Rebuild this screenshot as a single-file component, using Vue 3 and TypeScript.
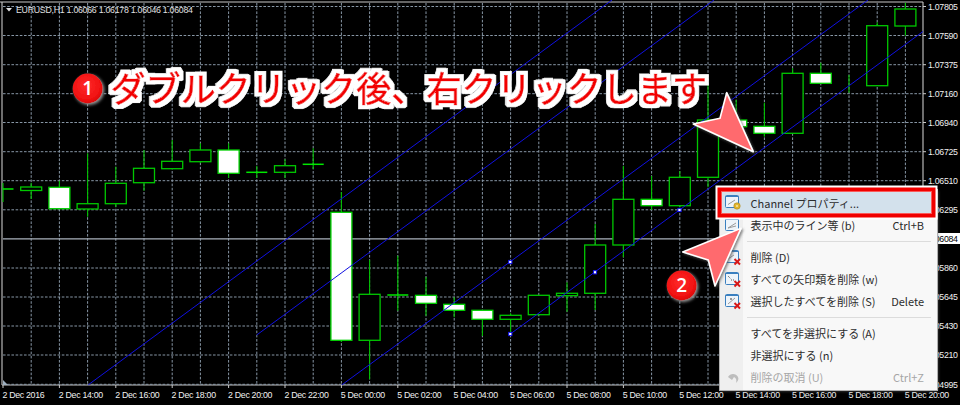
<script setup lang="ts">
type Candle = { top: number; bottom: number; high: number; low: number; kind: 'white' | 'hollow' | 'doji' }

const step = 28.2
const xAt = (i: number) => 3 + step * i

const candles: Candle[] = [
  { top: 189, bottom: 189, high: 183, low: 202, kind: 'doji' },
  { top: 187, bottom: 190.5, high: 182.7, low: 199, kind: 'hollow' },
  { top: 187.3, bottom: 208.7, high: 180.7, low: 209, kind: 'white' },
  { top: 203.7, bottom: 209, high: 153.3, low: 216.7, kind: 'hollow' },
  { top: 183.3, bottom: 203.7, high: 166.7, low: 207, kind: 'hollow' },
  { top: 168.3, bottom: 182.7, high: 150, low: 190.7, kind: 'hollow' },
  { top: 161.3, bottom: 168.7, high: 140, low: 169, kind: 'hollow' },
  { top: 150, bottom: 161.7, high: 143.3, low: 163, kind: 'hollow' },
  { top: 150, bottom: 173.3, high: 143.3, low: 178, kind: 'white' },
  { top: 172.3, bottom: 172.3, high: 166, low: 178, kind: 'doji' },
  { top: 165.7, bottom: 172.3, high: 159.3, low: 178, kind: 'hollow' },
  { top: 164.3, bottom: 164.3, high: 148.3, low: 169, kind: 'doji' },
  { top: 212.3, bottom: 340.3, high: 192, low: 342, kind: 'white' },
  { top: 294.3, bottom: 340.3, high: 260, low: 379.3, kind: 'hollow' },
  { top: 295, bottom: 295, high: 255.7, low: 310.7, kind: 'doji' },
  { top: 295.3, bottom: 303.3, high: 277, low: 315.7, kind: 'white' },
  { top: 304.3, bottom: 310.3, high: 297.3, low: 317.3, kind: 'white' },
  { top: 310.3, bottom: 319.3, high: 310, low: 336, kind: 'white' },
  { top: 315.3, bottom: 319.3, high: 313.3, low: 333, kind: 'hollow' },
  { top: 295.3, bottom: 314.7, high: 295.3, low: 314.7, kind: 'hollow' },
  { top: 293.3, bottom: 295.7, high: 282.3, low: 311.7, kind: 'hollow' },
  { top: 245, bottom: 293.3, high: 224, low: 310, kind: 'hollow' },
  { top: 199.3, bottom: 245, high: 166, low: 257.3, kind: 'hollow' },
  { top: 199.3, bottom: 205.7, high: 176, low: 210, kind: 'white' },
  { top: 177.3, bottom: 205.7, high: 171, low: 207, kind: 'hollow' },
  { top: 120, bottom: 177.3, high: 85, low: 187, kind: 'hollow' },
  { top: 120, bottom: 126.7, high: 100, low: 140, kind: 'white' },
  { top: 126.3, bottom: 133.3, high: 102.7, low: 136.7, kind: 'white' },
  { top: 73.3, bottom: 133.3, high: 68.3, low: 133.3, kind: 'hollow' },
  { top: 73.3, bottom: 83.3, high: 62.7, low: 84, kind: 'white' },
  { top: 84.5, bottom: 84.5, high: 75, low: 92.7, kind: 'hollow' },
  { top: 25.7, bottom: 85.7, high: 22.3, low: 85.7, kind: 'hollow' },
  { top: 9, bottom: 26, high: 2.7, low: 35.7, kind: 'hollow' },
]

const gridX = Array.from({ length: 32 }, (_, i) => xAt(i + 1))
const gridY = [6.5, 35.5, 64.7, 93.7, 122.5, 151.7, 180.7, 209.8, 268, 297, 326, 355, 384.3]

const prices = [
  { y: 6.5, t: '1.07805' }, { y: 35.5, t: '1.07590' }, { y: 64.7, t: '1.07375' }, { y: 93.7, t: '1.07160' },
  { y: 122.5, t: '1.06940' }, { y: 151.7, t: '1.06725' }, { y: 180.7, t: '1.06510' }, { y: 209.8, t: '1.06295' },
  { y: 268, t: '1.05860' }, { y: 297, t: '1.05645' }, { y: 326, t: '1.05430' }, { y: 355, t: '1.05210' }, { y: 384.3, t: '1.04995' },
]

const dates = [
  '2 Dec 2016', '2 Dec 14:00', '2 Dec 16:00', '2 Dec 18:00', '2 Dec 20:00', '2 Dec 22:00',
  '5 Dec 00:00', '5 Dec 02:00', '5 Dec 04:00', '5 Dec 06:00', '5 Dec 08:00', '5 Dec 10:00',
  '5 Dec 12:00', '5 Dec 14:00', '5 Dec 16:00', '5 Dec 18:00', '5 Dec 20:00',
]

const lines = [
  { x1: 88.3, y1: 384.8, x2: 612, y2: 0 },
  { x1: 256.7, y1: 335, x2: 714, y2: 0 },
  { x1: 341.7, y1: 385, x2: 868, y2: 0 },
  { x1: 510.3, y1: 334, x2: 923, y2: 31.5 },
]
const anchors = [
  { x: 510.3, y: 262 }, { x: 510.3, y: 334 }, { x: 595, y: 272.3 }, { x: 679.5, y: 210 },
]

type Row = { label: string; key: string; icon: string; hint?: string; disabled?: boolean; active?: boolean }
const groups: Row[][] = [
  [
    { label: 'Channel プロパティ...', key: 'p', icon: 'prop', active: true },
    { label: '表示中のライン等 (b)', key: 'b', icon: 'show', hint: 'Ctrl+B' },
  ],
  [
    { label: '削除 (D)', key: 'd', icon: 'del' },
    { label: 'すべての矢印類を削除 (w)', key: 'w', icon: 'delarrow' },
    { label: '選択したすべてを削除 (S)', key: 's', icon: 'delall', hint: 'Delete' },
  ],
  [
    { label: 'すべてを非選択にする (A)', key: 'a', icon: '' },
    { label: '非選択にする (n)', key: 'n', icon: '' },
    { label: '削除の取消 (U)', key: 'u', icon: 'undo', hint: 'Ctrl+Z', disabled: true },
  ],
]
</script>

<template>
  <div class="screen">
    <svg class="chart" width="960" height="405" viewBox="0 0 960 405">
      <line class="frame" x1="0" y1="2" x2="923" y2="2" />
      <line class="frame" x1="2" y1="2" x2="2" y2="385" />
      <line class="frame" x1="923" y1="2" x2="923" y2="385" />
      <line class="frame" x1="2" y1="385" x2="923" y2="385" />

      <line v-for="x in gridX" :key="'v' + x" class="grid" :x1="x" y1="3" :x2="x" y2="385" />
      <line v-for="y in gridY" :key="'h' + y" class="grid" x1="3" :y1="y" x2="923" :y2="y" />
      <line class="bid" x1="3" y1="238.8" x2="923" y2="238.8" />

      <g v-for="(c, i) in candles" :key="'c' + i">
        <line class="wick" :x1="xAt(i)" :y1="c.high" :x2="xAt(i)" :y2="c.low" />
        <line v-if="c.kind === 'doji'" class="doji" :x1="Math.max(xAt(i) - 10.5, 3)" :y1="c.top" :x2="xAt(i) + 10.5" :y2="c.top" />
        <rect v-else :class="c.kind" :x="xAt(i) - 10.5" :y="c.top" width="21" :height="c.bottom - c.top" />
      </g>

      <line v-for="(l, i) in lines" :key="'l' + i" class="channel" :x1="l.x1" :y1="l.y1" :x2="l.x2" :y2="l.y2" />
      <rect v-for="(a, i) in anchors" :key="'a' + i" class="anchor" :x="a.x - 1.6" :y="a.y - 1.6" width="3.2" height="3.2" />

      <polygon class="shift" points="3,380 3,385 8,385" />
      <polygon class="title" points="6,8 12,8 9,11.5" />
      <text class="title" x="16" y="12.5" xml:space="preserve">EURUSD,H1  1.06066 1.06178 1.06046 1.06084</text>

      <g v-for="p in prices" :key="p.t">
        <line class="tick" x1="923" :y1="p.y" x2="926" :y2="p.y" />
        <text class="axis" x="928" :y="p.y + 3.2">{{ p.t }}</text>
      </g>
      <rect class="bid-box" x="925" y="233" width="35" height="11" />
      <text class="bid-text" x="928" y="242">1.06084</text>

      <g v-for="(d, i) in dates" :key="d">
        <line class="tick" :x1="3 + 56.4 * i" y1="385" :x2="3 + 56.4 * i" y2="388" />
        <text class="axis" :x="2.4 + 56.4 * i" y="398.2">{{ d }}</text>
      </g>
    </svg>

    <div class="menu">
      <template v-for="(g, gi) in groups" :key="gi">
        <div v-if="gi > 0" class="sep"></div>
        <div v-for="r in g" :key="r.key" class="row" :class="{ active: r.active, disabled: r.disabled }">
          <span class="icon-cell">
            <svg v-if="r.icon" class="mi" width="18" height="17" viewBox="0 0 18 17">
              <template v-if="r.icon === 'undo'">
                <path class="undo" d="M4 8 C6 4 12 4 14 8 C15 10 14 12 12 14 C13 11 12 9 10 8 L8 11 Z" />
              </template>
              <template v-else>
                <rect class="win" x="1.5" y="1.5" width="13" height="12" rx="1" />
                <line class="win-top" x1="1.5" y1="2.5" x2="14.5" y2="2.5" />
                <line v-if="r.icon === 'prop'" class="stroke-gray" x1="4" y1="10.5" x2="11" y2="6" />
                <template v-if="r.icon === 'show'">
                  <line class="stroke-gray" x1="4" y1="11" x2="12" y2="6" />
                  <line class="stroke-gray" x1="4" y1="11" x2="12" y2="9" />
                </template>
                <line v-if="r.icon === 'del'" class="stroke-gray" x1="4" y1="10" x2="10" y2="6" />
                <template v-if="r.icon === 'delarrow'">
                  <line class="stroke-dark" x1="4" y1="5" x2="7" y2="8" />
                  <line class="stroke-dark" x1="7" y1="9" x2="11" y2="9" />
                </template>
                <template v-if="r.icon === 'delall'">
                  <line class="stroke-gray" x1="4" y1="11" x2="11" y2="5" />
                  <circle class="dot" cx="7" cy="6" r="1" />
                </template>
                <circle v-if="r.icon === 'prop'" class="gear" cx="13" cy="12" r="3.2" />
                <circle v-if="r.icon === 'prop'" class="gear-hole" cx="13" cy="12" r="1" />
                <g v-if="r.icon.startsWith('del')">
                  <line class="cross" x1="10.5" y1="10" x2="16" y2="15.5" />
                  <line class="cross" x1="16" y1="10" x2="10.5" y2="15.5" />
                </g>
              </template>
            </svg>
          </span>
          <span class="label">{{ r.label }}</span>
          <span v-if="r.hint" class="hint">{{ r.hint }}</span>
        </div>
      </template>
    </div>

    <svg class="overlay" width="960" height="405" viewBox="0 0 960 405">
      <defs>
        <radialGradient id="badge" cx="0.45" cy="0.4" r="0.65">
          <stop offset="0" stop-color="#ff2a2a" />
          <stop offset="0.75" stop-color="#f01010" />
          <stop offset="1" stop-color="#c80808" />
        </radialGradient>
        <filter id="soft" x="-30%" y="-30%" width="170%" height="170%">
          <feDropShadow dx="1.5" dy="1.5" stdDeviation="1.6" flood-color="#999" />
        </filter>
        <filter id="arrow-shadow" x="-20%" y="-20%" width="150%" height="150%">
          <feDropShadow dx="1.5" dy="1.5" stdDeviation="1.2" flood-color="#555" flood-opacity="0.7" />
        </filter>
        <filter id="outline" x="-5%" y="-30%" width="110%" height="160%">
          <feMorphology in="SourceAlpha" operator="dilate" radius="3.8" result="fat" />
          <feGaussianBlur in="fat" stdDeviation="0.7" result="soft" />
          <feFlood flood-color="#fff" />
          <feComposite in2="soft" operator="in" result="halo" />
          <feMerge>
            <feMergeNode in="halo" />
            <feMergeNode in="SourceGraphic" />
          </feMerge>
        </filter>
      </defs>

      <text class="headline" filter="url(#outline)" x="110.5" y="102">ダブルクリック後、右クリックします</text>

      <polygon class="arrow" filter="url(#arrow-shadow)" points="753.3,151.7 726.7,92.7 720,118.3 693.3,124" />
      <polygon class="arrow" filter="url(#arrow-shadow)" points="741,228.3 682.7,252 708.3,260 715,286" />

      <circle cx="87.7" cy="88.5" r="15" fill="url(#badge)" filter="url(#soft)" />
      <text class="badge-num" x="87.7" y="95.3">1</text>
      <circle cx="681.7" cy="285.5" r="15" fill="url(#badge)" filter="url(#soft)" />
      <text class="badge-num" x="681.7" y="292.3">2</text>
    </svg>
  </div>
</template>

<style scoped>
.screen {
  position: relative;
  width: 960px;
  height: 405px;
  overflow: hidden;
  background: #000;
}
.chart {
  display: block;
  font-family: "Liberation Sans", sans-serif;
}
.overlay {
  position: absolute;
  left: 0;
  top: 0;
  pointer-events: none;
}
.frame {
  stroke: #c8c8c8;
  stroke-width: 1.1;
}
.grid {
  stroke: #8796a5;
  stroke-width: 1;
  stroke-dasharray: 2.6 1.6;
}
.bid {
  stroke: #aab2bc;
  stroke-width: 1.2;
}
.tick {
  stroke: #c8c8c8;
  stroke-width: 1;
}
.wick {
  stroke: #00c000;
  stroke-width: 1.1;
}
.doji {
  stroke: #00e800;
  stroke-width: 1.5;
}
.white {
  fill: #fff;
  stroke: #00d000;
  stroke-width: 1.3;
}
.hollow {
  fill: #000;
  stroke: #00c800;
  stroke-width: 1.3;
}
.channel {
  stroke: #1010e0;
  stroke-width: 1;
}
.anchor {
  fill: #fff;
  stroke: #1010f0;
  stroke-width: 1;
}
.shift {
  fill: #9fb0c0;
}
.title {
  fill: #e0e0e0;
  font-size: 8.8px;
  letter-spacing: -0.27px;
}
.axis {
  fill: #f0f0f0;
  font-size: 8.8px;
  letter-spacing: -0.3px;
}
.bid-box {
  fill: #fff;
}
.bid-text {
  fill: #000;
  font-size: 8.8px;
  letter-spacing: -0.3px;
}
.menu {
  position: absolute;
  left: 720px;
  top: 190px;
  width: 217px;
  height: 200px;
  box-sizing: border-box;
  padding: 2px 6px 0 2px;
  background: linear-gradient(90deg, #efefef 23px, #f8f8f8 23px);
  box-shadow: 0 0 0 1px #b0b0b0, 1px 1px 3px rgba(120, 120, 120, 0.6);
  font-family: "Noto Sans CJK JP", "Liberation Sans", sans-serif;
  font-size: 11px;
  color: #2c2c2c;
}
.row {
  position: relative;
  display: flex;
  align-items: center;
  height: 22px;
  white-space: nowrap;
}
.row.active {
  height: 21px;
  margin-bottom: 1px;
  background: #d3e1ec;
  box-shadow: 0 0 0 4.5px #f00000, 0 0 0 6.5px #fff;
  outline: 1px solid rgba(255, 150, 150, 0.6);
  z-index: 2;
}
.row.disabled {
  color: #a6a6a6;
}
.icon-cell {
  flex: 0 0 28.5px;
  height: 17px;
  padding-left: 2px;
  box-sizing: border-box;
}
.mi {
  display: block;
}
.label {
  flex: 1;
}
.hint {
  padding-right: 7px;
}
.sep {
  height: 1px;
  margin: 5px 0 4px 25px;
  background: #dcdcdc;
}
.win {
  fill: #eef4fa;
  stroke: #3a7fbf;
  stroke-width: 1;
}
.win-top {
  stroke: #3a7fbf;
  stroke-width: 1;
}
.stroke-gray {
  stroke: #9a9a9a;
  stroke-width: 1;
}
.stroke-dark {
  stroke: #555;
  stroke-width: 1;
  stroke-dasharray: 1 1;
}
.dot {
  fill: #777;
}
.gear {
  fill: #e2b52c;
  stroke: #a8841c;
  stroke-width: 0.6;
}
.gear-hole {
  fill: #f4e6a8;
}
.cross {
  stroke: #d81818;
  stroke-width: 2;
}
.undo {
  fill: #bdbdbd;
}
.headline {
  font-family: "Noto Sans CJK JP", sans-serif;
  font-size: 35px;
  font-weight: 400;
  letter-spacing: 0.1px;
  fill: #f20000;
  stroke: #f20000;
  stroke-width: 0.7px;
}
.badge-num {
  font-family: "Open Sans", sans-serif;
  font-size: 19px;
  font-weight: 600;
  fill: #fff;
  text-anchor: middle;
}
.arrow {
  fill: #ff6b6e;
  stroke: #fff;
  stroke-width: 1.6;
  stroke-linejoin: round;
}
</style>
